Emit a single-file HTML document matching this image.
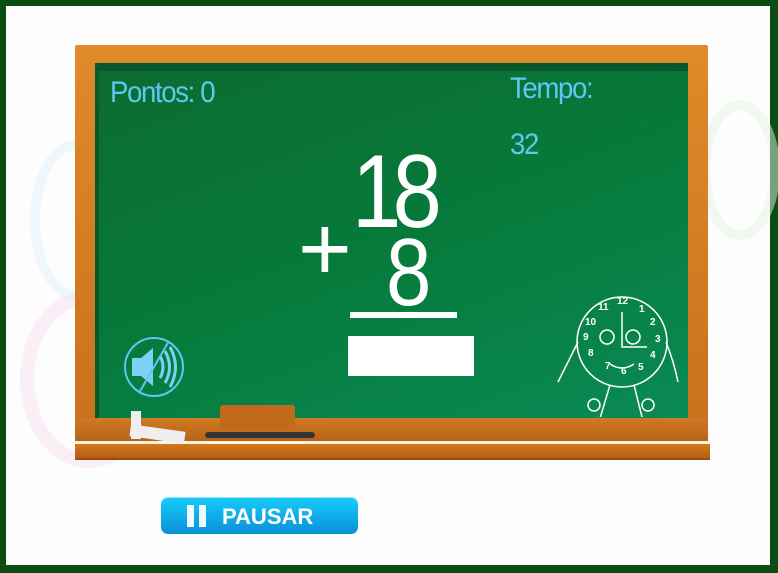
<!DOCTYPE html>
<html><head><meta charset="utf-8"><style>
body{margin:0;width:778px;height:573px;overflow:hidden;background:#0b4d12;font-family:"Liberation Sans",sans-serif}
#in{position:absolute;left:6px;top:6px;width:764px;height:559px;background:#fdfdfd}
.a{position:absolute}
.t{color:#5ec8f4;font-family:"Liberation Sans",sans-serif;font-size:30px;letter-spacing:-1.5px;transform:scaleX(.92);transform-origin:left}
.w{color:#fff;font-family:"Liberation Sans",sans-serif;font-weight:normal}
</style></head><body>
<div id="in"></div>
<div class="a" style="left:20px;top:290px;width:110px;height:150px;border:14px solid #f7d3ea;border-radius:50%;opacity:.35"></div>
<div class="a" style="left:30px;top:140px;width:70px;height:140px;border:10px solid #d6eefa;border-radius:50%;opacity:.4"></div>
<div class="a" style="left:700px;top:100px;width:60px;height:120px;border:10px solid #e6f4e4;border-radius:50%;opacity:.5"></div>
<!-- frame -->
<div class="a" style="left:75px;top:45px;width:633px;height:400px;background:linear-gradient(#e08a2a,#c8701c);border-radius:2px"></div>
<div class="a" style="left:95px;top:63px;width:593px;height:355px;background:linear-gradient(160deg,#0d6b30,#067a3a 50%,#0a8a55);box-shadow:inset 4px 8px 0 #07582a"></div>
<div class="a" style="left:75px;top:418px;width:633px;height:23px;background:linear-gradient(#d07a22,#b8621a)"></div>
<div class="a" style="left:75px;top:441px;width:635px;height:3px;background:#fff3dd"></div>
<div class="a" style="left:75px;top:444px;width:635px;height:14px;background:linear-gradient(#d2781e,#b75e14);border-bottom:2px solid #9a4c10"></div>
<!-- eraser & chalk -->
<div class="a" style="left:220px;top:405px;width:75px;height:24px;background:#c26a1c;border-radius:3px"></div>
<div class="a" style="left:205px;top:432px;width:110px;height:6px;background:#333;border-radius:3px"></div>
<div class="a" style="left:131px;top:411px;width:10px;height:28px;background:#eee"></div>
<div class="a" style="left:130px;top:428px;width:55px;height:12px;background:#eee;transform:rotate(8deg)"></div>
<!-- text -->
<div class="a t" style="left:110px;top:76px">Pontos: 0</div>
<div class="a t" style="left:510px;top:72px">Tempo:</div>
<div class="a t" style="left:510px;top:128px">32</div>
<div class="a w" style="left:352px;top:140px;font-size:104px;letter-spacing:-10px;line-height:104px;transform:scaleX(.85);transform-origin:left">18</div>
<div class="a w" style="left:386px;top:225px;font-size:96px;line-height:96px;transform:scaleX(.85);transform-origin:left">8</div>
<div class="a w" style="left:298px;top:203px;font-size:92px;line-height:92px">+</div>
<div class="a" style="left:350px;top:312px;width:107px;height:6px;background:#fff"></div>
<div class="a" style="left:348px;top:336px;width:126px;height:40px;background:#fff"></div>
<svg class="a" style="left:122px;top:336px" width="66" height="64" viewBox="0 0 66 64">
<circle cx="32" cy="31" r="29" fill="none" stroke="#5ec8f4" stroke-width="2"/>
<path d="M10 22h9l12-10v38l-12-10h-9z" fill="#7dd0f8"/>
<path d="M38 20q6 11 0 22M43 15q9 16 0 32M48 11q11 20 0 40" fill="none" stroke="#7dd0f8" stroke-width="3"/>
<line x1="47" y1="5" x2="17" y2="57" stroke="#5ec8f4" stroke-width="2"/>
</svg>
<svg class="a" style="left:550px;top:292px" width="132" height="125" viewBox="0 0 132 125" fill="none" stroke="#fff" stroke-width="1.5">
<circle cx="72" cy="50" r="45"/>
<circle cx="57" cy="45" r="7"/><circle cx="83" cy="45" r="7"/>
<path d="M72 20v35h25M60 72q12 8 24 0"/>
<path d="M28 50q-10 20-20 40M116 50q8 20 12 40M60 93l-12 40M84 93l10 40"/>
<circle cx="44" cy="113" r="6"/><circle cx="98" cy="113" r="6"/>
<g fill="#fff" stroke="none" font-size="10" font-family="Liberation Sans" font-weight="bold">
<text x="67" y="12">12</text><text x="89" y="20">1</text><text x="100" y="33">2</text><text x="105" y="50">3</text><text x="100" y="66">4</text><text x="88" y="78">5</text><text x="71" y="82">6</text><text x="55" y="77">7</text><text x="38" y="64">8</text><text x="33" y="48">9</text><text x="35" y="33">10</text><text x="48" y="18">11</text></g>
</svg>
<div class="a" style="left:161px;top:497px;width:197px;height:37px;border-radius:7px;background:linear-gradient(#18cdfa,#0a8fd8);box-shadow:inset 0 1px 0 #9ee8ff"></div>
<div class="a" style="left:187px;top:505px;width:7px;height:22px;background:#eefaff"></div>
<div class="a" style="left:199px;top:505px;width:7px;height:22px;background:#eefaff"></div>
<div class="a" style="left:222px;top:504px;color:#fff;font-weight:bold;font-size:22px">PAUSAR</div>
</body></html>
